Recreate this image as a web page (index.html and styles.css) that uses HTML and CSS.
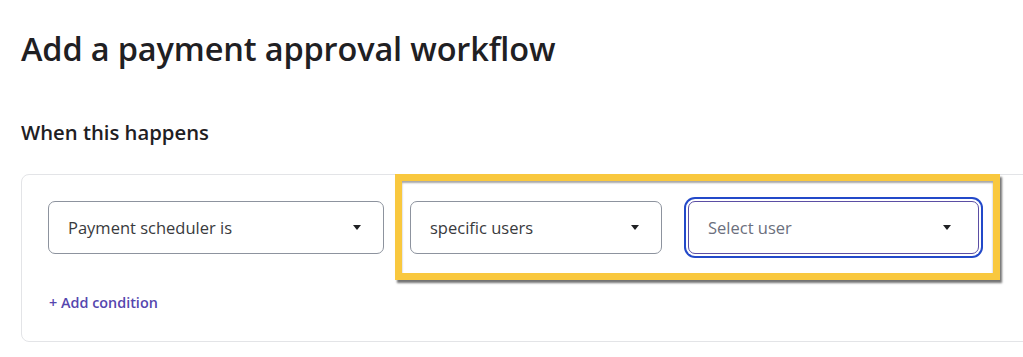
FILE: index.html
```html
<!DOCTYPE html>
<html lang="en">
<head>
<meta charset="utf-8">
<title>Add a payment approval workflow</title>
<link rel="stylesheet" href="styles.css">
</head>
<body>
<main class="page">
  <h1 class="title">Add a payment approval workflow</h1>
  <h2 class="section-title">When this happens</h2>
  <section class="card">
    <div class="row">
      <div class="select select-wide">
        <span class="select-text">Payment scheduler is</span>
        <span class="caret"></span>
      </div>
      <div class="select select-mid">
        <span class="select-text">specific users</span>
        <span class="caret"></span>
      </div>
      <div class="select select-user is-focused">
        <span class="select-text placeholder">Select user</span>
        <span class="caret"></span>
      </div>
    </div>
    <a class="add-link" href="#">+ Add condition</a>
    <div class="highlight"></div>
  </section>
</main>
</body>
</html>
```
FILE: styles.css
```css
html, body {
  margin: 0;
  padding: 0;
  background: #ffffff;
  overflow: hidden;
}

body {
  font-family: "Open Sans", "Noto Sans", "Liberation Sans", sans-serif;
  color: #393a3d;
}

.page {
  padding: 27px 0 0 21px;
}

.title {
  margin: 0;
  font-size: 32.5px;
  line-height: 44px;
  font-weight: 600;
  color: #1f2023;
  letter-spacing: -0.15px;
}

.section-title {
  margin: 48px 0 0;
  font-size: 20.3px;
  line-height: 26px;
  font-weight: 600;
  color: #1f2023;
}

.card {
  position: relative;
  margin-top: 29px;
  margin-right: -40px;
  border: 1px solid #e3e4e7;
  border-radius: 8px;
  padding: 26px 26px 0;
  height: 168px;
  box-sizing: border-box;
}

.row {
  display: flex;
  gap: 26px;
}

.select {
  height: 53px;
  box-sizing: border-box;
  border: 1px solid #8d939e;
  border-radius: 7px;
  display: flex;
  align-items: center;
  justify-content: space-between;
  padding: 0 22px 0 19px;
  background: #fff;
}

.select-wide { width: 336px; }
.select-mid { width: 252px; }
.select-user { width: 291px; padding-right: 27px; }

.select-text {
  font-size: 16.5px;
  color: #393a3d;
}

.placeholder {
  color: #6b6f7d;
}

.caret {
  width: 0;
  height: 0;
  border-left: 4px solid transparent;
  border-right: 4px solid transparent;
  border-top: 5px solid #1f2023;
}

.is-focused {
  border-color: #5b4ea4;
  box-shadow: 0 0 0 2px #ffffff, 0 0 0 4px #2349c9;
}

.add-link {
  display: inline-block;
  margin-top: 39px;
  margin-left: 1px;
  font-size: 14.4px;
  font-weight: 600;
  color: #5546ae;
  text-decoration: none;
}

.highlight {
  position: absolute;
  left: 373px;
  top: -1px;
  width: 605px;
  height: 106px;
  box-sizing: border-box;
  border: 7px solid #f9c83e;
  box-shadow: 2px 3px 2px rgba(0, 0, 0, 0.55), inset 0 2px 2px rgba(0, 0, 0, 0.35);
  pointer-events: none;
}
```
